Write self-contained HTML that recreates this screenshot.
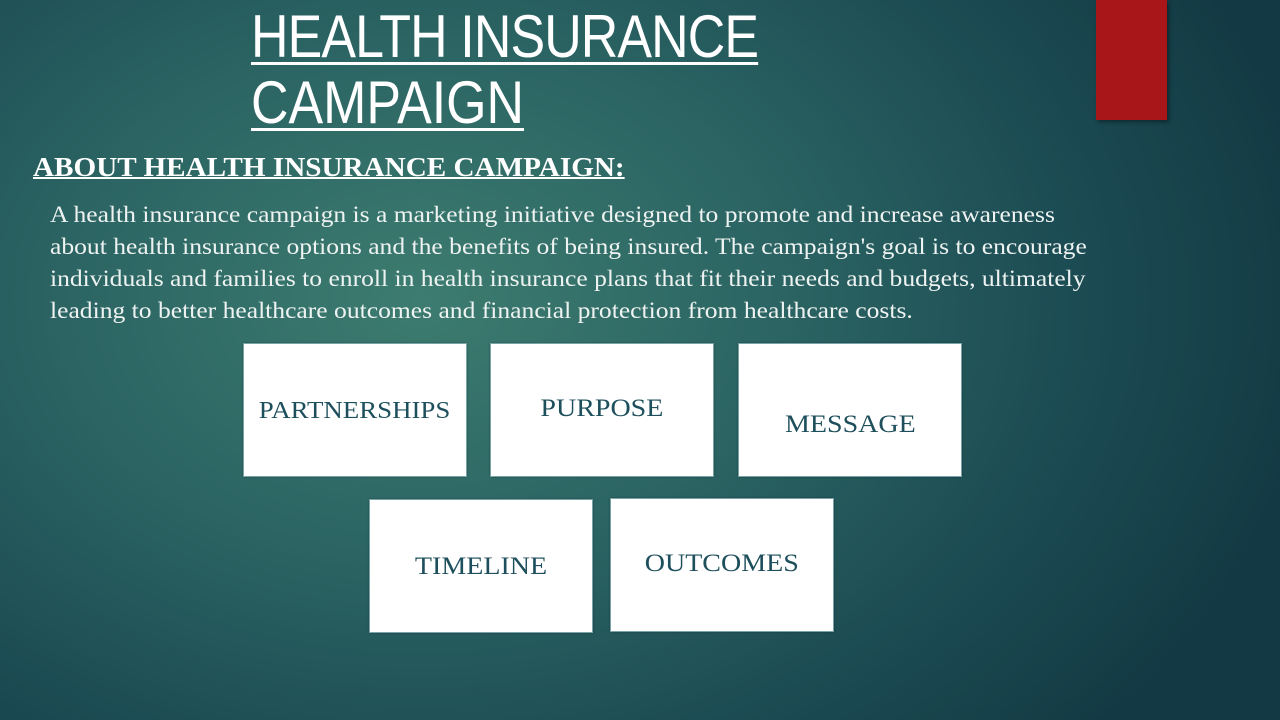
<!DOCTYPE html>
<html><head><style>
body{margin:0;width:1280px;height:720px;overflow:hidden;position:relative;
background:radial-gradient(ellipse 900px 650px at 420px 300px,#3d7c70 0%,#2b6463 40%,#1b4a52 75%,#133a44 100%);
font-family:"Liberation Serif",serif;color:#fff}
.t{position:absolute;left:251px;font-family:"Liberation Sans",sans-serif;font-size:60px;line-height:60px;text-decoration:underline;text-decoration-thickness:3px;text-underline-offset:5px;transform-origin:0 0;transform:scaleX(0.865);white-space:nowrap;letter-spacing:-1px}
.red{position:absolute;left:1096px;top:0;width:71px;height:120px;background:#a9161a;box-shadow:2px 2px 4px rgba(0,0,0,.4)}
.h{position:absolute;left:33px;top:152px;font-weight:bold;font-size:27px;text-decoration:underline;text-decoration-thickness:2px;white-space:nowrap;transform-origin:0 0;transform:scaleX(1.08)}
.p{position:absolute;left:50px;top:199px;font-size:23px;line-height:32px;color:#eef3f2;transform-origin:0 0;transform:scaleX(1.112);white-space:nowrap}
.b{position:absolute;width:224px;height:134px;background:#fff;border:1px solid #7aa3a8;box-shadow:0 0 2px rgba(0,0,0,.3);color:#1e4f5c;font-size:25px;display:flex;justify-content:center;align-items:center;box-sizing:border-box}
.b span{display:inline-block;transform:scaleX(1.12)}
</style></head><body>
<div class="t" style="top:7px">HEALTH INSURANCE</div>
<div class="t" style="top:73px;letter-spacing:0">CAMPAIGN</div>
<div class="red"></div>
<div class="h">ABOUT HEALTH INSURANCE CAMPAIGN:</div>
<div class="p">A health insurance campaign is a marketing initiative designed to promote and increase awareness<br>about health insurance options and the benefits of being insured. The campaign's goal is to encourage<br>individuals and families to enroll in health insurance plans that fit their needs and budgets, ultimately<br>leading to better healthcare outcomes and financial protection from healthcare costs.</div>
<div class="b" style="left:243px;top:343px;font-size:24px"><span style="margin-top:2px">PARTNERSHIPS</span></div>
<div class="b" style="left:490px;top:343px"><span style="margin-top:-2px">PURPOSE</span></div>
<div class="b" style="left:738px;top:343px"><span style="margin-top:30px">MESSAGE</span></div>
<div class="b" style="left:369px;top:499px"><span style="margin-top:2px">TIMELINE</span></div>
<div class="b" style="left:610px;top:498px"><span style="margin-top:-2px">OUTCOMES</span></div>
</body></html>
